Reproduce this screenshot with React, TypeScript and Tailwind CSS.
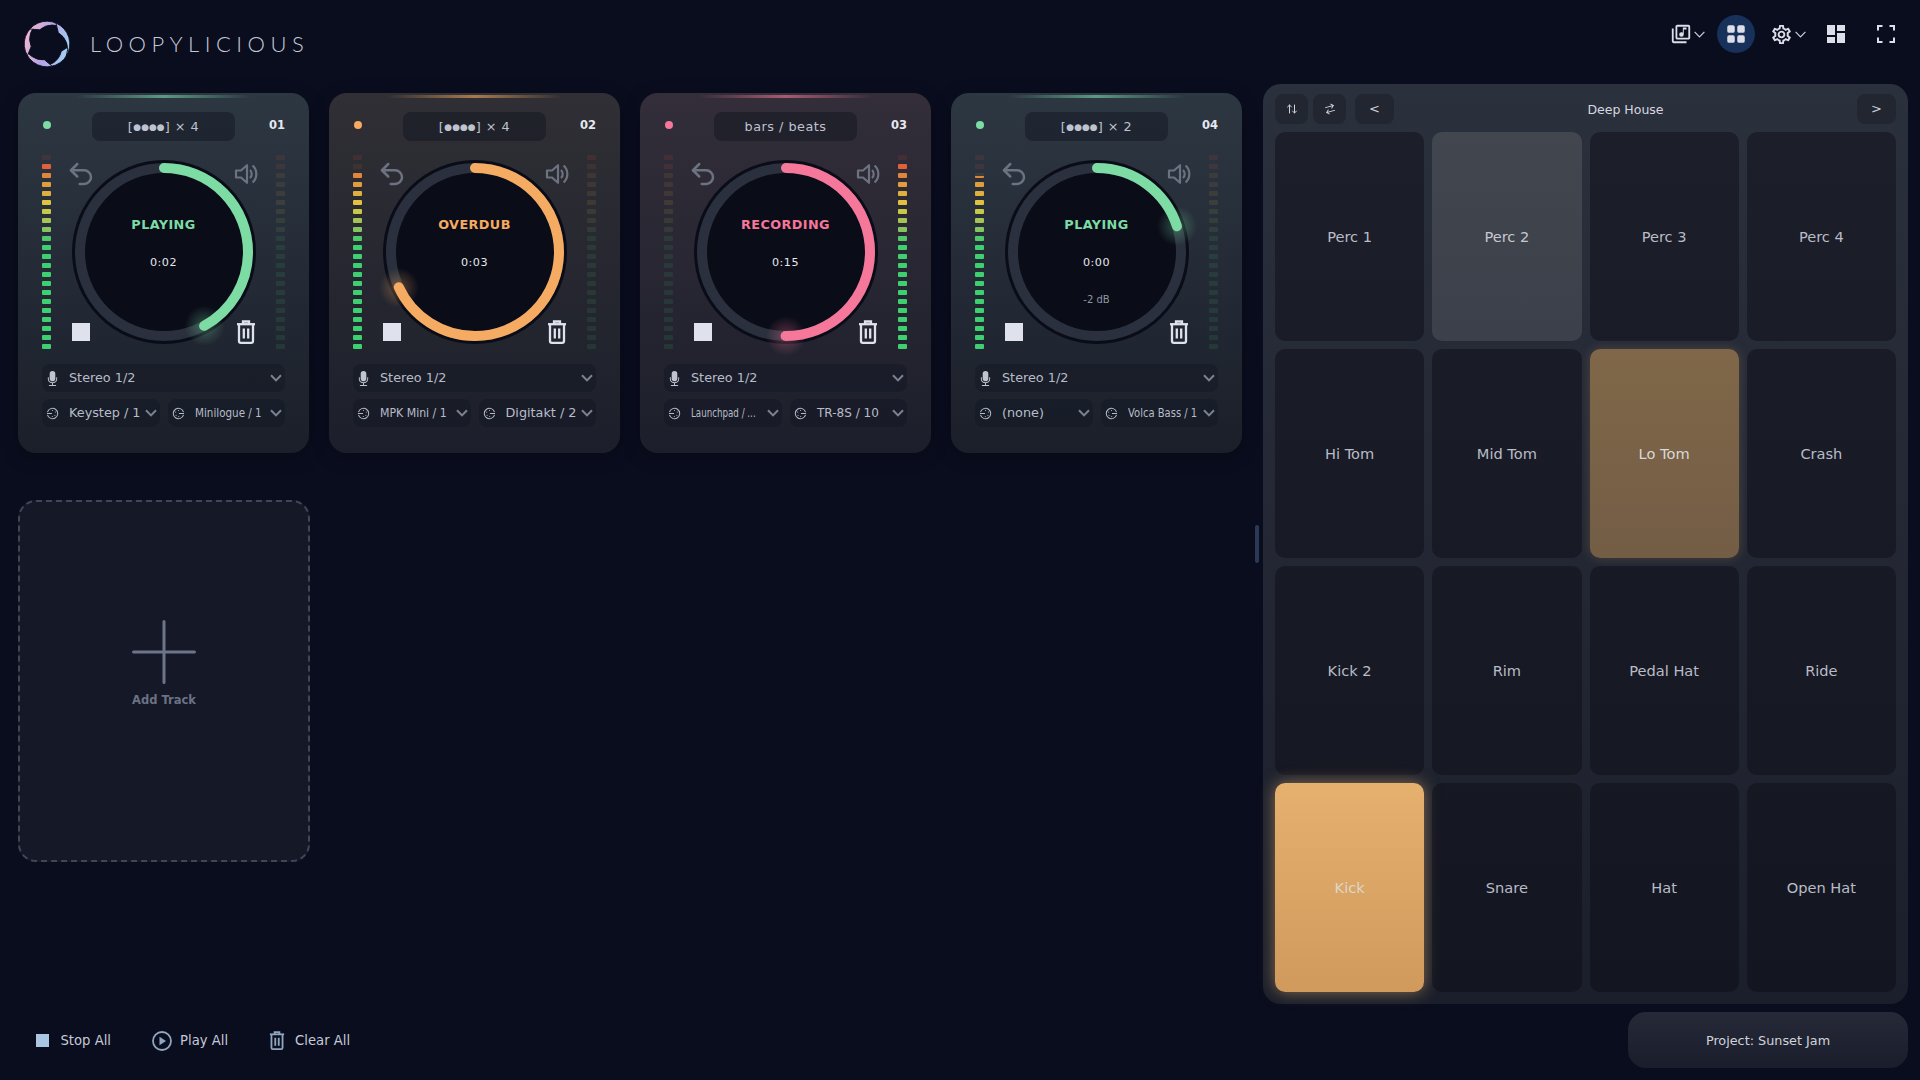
import React from "react";
import { Undo2, ArrowUpDown, ArrowRightLeft } from "lucide-react";
import { BsMicFill, BsGridFill } from "react-icons/bs";
import { MdOutlineLibraryMusic, MdOutlineSettings, MdDashboard } from "react-icons/md";

const SEG = ["#e0553a","#e0603a","#e0863a","#e09c3d","#e0b03e","#e0c240","#c8c848","#a5c455","#85c460","#4ec86b"];
const segColor = (i: number) => SEG[i] ?? "#3ecf70";

function Meter({ level }: { level: number }) {
  return (
    <div className="flex flex-col gap-[4px]">
      {Array.from({ length: 22 }).map((_, i) => {
        const fromBottom = 22 - i;
        const fill = Math.max(0, Math.min(1, level - fromBottom + 1));
        const c = segColor(i);
        return (
          <div key={i} className="flex h-[5px] w-[9px] items-end overflow-hidden rounded-[1px]" style={{ backgroundColor: c + "1c" }}>
            <div className="w-full" style={{ height: `${fill * 100}%`, backgroundColor: c }} />
          </div>
        );
      })}
    </div>
  );
}

function Chevron({ className = "text-[#7d8291]" }: { className?: string }) {
  return (
    <svg width="12" height="8" viewBox="0 0 12 8" fill="none" stroke="currentColor" strokeWidth="2" className={"shrink-0 " + className}>
      <path d="M1 1.2 6 6.4 11 1.2" />
    </svg>
  );
}

function ThinChevron() {
  return (
    <svg width="11" height="7" viewBox="0 0 11 7" fill="none" stroke="currentColor" strokeWidth="1.2" className="shrink-0 text-[#c9cdda]">
      <path d="M.6.8 5.5 5.8 10.4.8" />
    </svg>
  );
}

function MidiIcon({ out }: { out?: boolean }) {
  return (
    <svg width="13" height="13" viewBox="0 0 14 14" fill="none" stroke="#b5b9c6" strokeWidth="1.1" className="shrink-0">
      {out ? (
        <>
          <path d="M12.4 5.6A5.6 5.6 0 1 0 12.4 8.4" />
          <path d="M7.5 7H13" />
          <circle cx="7" cy="3.7" r=".6" fill="#b5b9c6" stroke="none" />
          <circle cx="4" cy="5.5" r=".6" fill="#b5b9c6" stroke="none" />
          <circle cx="4.4" cy="9" r=".6" fill="#b5b9c6" stroke="none" />
          <circle cx="7.2" cy="10.3" r=".6" fill="#b5b9c6" stroke="none" />
        </>
      ) : (
        <>
          <path d="M1.6 5.6A5.6 5.6 0 1 1 1.6 8.4" />
          <path d="M1 7H6.5" />
          <circle cx="7" cy="3.7" r=".6" fill="#b5b9c6" stroke="none" />
          <circle cx="10" cy="5.5" r=".6" fill="#b5b9c6" stroke="none" />
          <circle cx="9.6" cy="9" r=".6" fill="#b5b9c6" stroke="none" />
          <circle cx="6.8" cy="10.3" r=".6" fill="#b5b9c6" stroke="none" />
        </>
      )}
    </svg>
  );
}

function TrashIcon({ className, w = 20, h = 24 }: { className: string; w?: number; h?: number }) {
  return (
    <svg width={w} height={h} viewBox="0 0 20 24" fill="none" stroke="currentColor" strokeWidth="2.3" className={className}>
      <path d="M1 4.2H19" />
      <path d="M7 4V1.5H13V4" />
      <path d="M3 4.5V21a1.8 1.8 0 0 0 1.8 1.8H15.2A1.8 1.8 0 0 0 17 21V4.5" />
      <path d="M7.8 8.5V18.5M12.2 8.5V18.5" />
    </svg>
  );
}

function SpeakerIcon({ className }: { className: string }) {
  return (
    <svg width="24" height="24" viewBox="0 0 24 24" fill="none" stroke="currentColor" strokeWidth="2.2" className={className}>
      <path d="M2 8.5H7L13 3.2V20.8L7 15.5H2Z" strokeLinejoin="round" />
      <path d="M16 8a5.5 5.5 0 0 1 0 8" />
      <path d="M18.6 3.5a11.5 11.5 0 0 1 0 17" />
    </svg>
  );
}

function Knob({ pct, color, id }: { pct: number; color: string; id: string }) {
  const r = 84;
  const circ = 2 * Math.PI * r;
  const a = (pct / 100) * 2 * Math.PI;
  const ex = 91 + r * Math.sin(a);
  const ey = 91 - r * Math.cos(a);
  return (
    <svg width="182" height="182" viewBox="0 0 182 182" className="overflow-visible">
      <defs>
        <radialGradient id={id}>
          <stop offset="0" stopColor={color} stopOpacity=".34" />
          <stop offset="1" stopColor={color} stopOpacity="0" />
        </radialGradient>
      </defs>
      <circle cx="91" cy="91" r="92" fill="#0a0c18" />
      <circle cx="91" cy="91" r={r} fill="none" stroke="#2a303d" strokeWidth="10" />
      <circle cx={ex} cy={ey} r="20" fill={`url(#${id})`} />
      <circle
        cx="91"
        cy="91"
        r={r}
        fill="none"
        stroke={color}
        strokeWidth="10"
        strokeLinecap="round"
        strokeDasharray={`${(pct / 100) * circ} ${circ}`}
        transform="rotate(-90 91 91)"
      />
    </svg>
  );
}

type Track = {
  num: string; pattern: string; status: string; time: string; db?: string; pct: number; hex: string;
  card: string; line: string; dot: string; text: string; left: number; right: number;
  midiIn: string; midiInCls: string; midiOut: string; midiOutCls: string;
};

const tracks: Track[] = [
  { num: "01", pattern: "× 4", status: "PLAYING", time: "0:02", pct: 42, hex: "#7ddba4",
    card: "bg-gradient-to-b from-[#2d3742] to-[#1b1f2a]", line: "via-[#5b9a83]", dot: "bg-[#7ddba4]", text: "text-[#7ddba4]",
    left: 21, right: 0, midiIn: "Keystep / 1", midiInCls: "scale-x-100", midiOut: "Minilogue / 1", midiOutCls: "scale-x-[.81]" },
  { num: "02", pattern: "× 4", status: "OVERDUB", time: "0:03", pct: 68, hex: "#f5ab62",
    card: "bg-gradient-to-b from-[#302f35] to-[#1c1f2b]", line: "via-[#a87a4c]", dot: "bg-[#f5ab62]", text: "text-[#f5ab62]",
    left: 20, right: 0, midiIn: "MPK Mini / 1", midiInCls: "scale-x-[.855]", midiOut: "Digitakt / 2", midiOutCls: "scale-x-100" },
  { num: "03", pattern: "bars / beats", status: "RECORDING", time: "0:15", pct: 50, hex: "#f5779a",
    card: "bg-gradient-to-b from-[#332e39] to-[#1c1f2b]", line: "via-[#a85a72]", dot: "bg-[#f5779a]", text: "text-[#f5779a]",
    left: 0, right: 21, midiIn: "Launchpad / ...", midiInCls: "scale-x-[.68]", midiOut: "TR-8S / 10", midiOutCls: "scale-x-[.94]" },
  { num: "04", pattern: "× 2", status: "PLAYING", time: "0:00", db: "-2 dB", pct: 20, hex: "#7ddba4",
    card: "bg-gradient-to-b from-[#2d3742] to-[#1b1f2a]", line: "via-[#5b9a83]", dot: "bg-[#7ddba4]", text: "text-[#7ddba4]",
    left: 19.5, right: 0, midiIn: "(none)", midiInCls: "scale-x-100", midiOut: "Volca Bass / 1", midiOutCls: "scale-x-[.78]" },
];

function SelectBox({ icon, label, cls }: { icon: React.ReactNode; label: string; cls: string }) {
  return (
    <div className="flex h-7 min-w-0 items-center rounded-lg bg-[#0f1420]/35 pr-[3px] pl-[3px]">
      <div className="mr-[9px] flex w-[15px] shrink-0 justify-center">{icon}</div>
      <div className="min-w-0 flex-1 whitespace-nowrap text-[12.8px] text-[#b8bcc9]">
        <span className={"inline-block origin-left " + cls}>{label}</span>
      </div>
      <Chevron />
    </div>
  );
}

function Pattern({ value }: { value: string }) {
  if (value.includes("/")) return <>{value}</>;
  return (
    <>
      [<span className="relative -top-[1px] text-[9px] tracking-normal">●●●●</span>] {value}
    </>
  );
}

function TrackCard({ t }: { t: Track }) {
  return (
    <div className={"relative flex h-[360px] w-[291px] flex-col rounded-[18px] px-6 pt-[19px] shadow-[0_4px_18px_rgba(0,0,0,.25)] " + t.card}>
      <div className={"absolute top-[2px] right-[20%] left-[20%] h-[3px] bg-gradient-to-r from-transparent to-transparent " + t.line} />
      <div className="grid h-[29px] grid-cols-[1fr_143px_1fr] items-center">
        <span className={"mb-[3px] ml-[1px] size-2 rounded-full " + t.dot} />
        <div className="flex h-[29px] items-center justify-center rounded-lg bg-[#0f1420]/45 text-[12.8px] tracking-[.5px] text-[#bfc3cf]">
          <span><Pattern value={t.pattern} /></span>
        </div>
        <span className="mb-[1px] text-right text-[11.5px] font-bold text-[#e6e8ef]">{t.num}</span>
      </div>
      <div className="relative mt-[14px] flex h-[194px] items-start justify-between">
        <Meter level={t.left} />
        <Meter level={t.right} />
        <div className="absolute top-[6px] left-[30.5px]">
          <div className="relative">
            <Knob pct={t.pct} color={t.hex} id={"g" + t.num} />
            <div className="absolute inset-0 flex flex-col items-center">
              <div className={"absolute top-[54px] text-[12.8px] font-bold tracking-[.4px] " + t.text}>{t.status}</div>
              <div className="absolute top-[94px] text-[11.2px] tracking-[.5px] text-[#e5e7eb]">{t.time}</div>
              {t.db && <div className="absolute top-[131px] text-[10px] text-[#9096a3]">{t.db}</div>}
            </div>
          </div>
        </div>
        <Undo2 size={30} strokeWidth={2} className="absolute top-[4px] left-[24px] text-[#6c7280]" />
        <SpeakerIcon className="absolute top-[7px] left-[192px] text-[#6c7280]" />
        <div className="absolute top-[168px] left-[30px] size-[18px] bg-[#dfe1ec]" />
        <TrashIcon className="absolute top-[165px] left-[193px] text-[#dfe1ec]" w={22} />
      </div>
      <div className="mt-[15px] flex flex-col gap-[7px]">
        <SelectBox icon={<BsMicFill size={15} className="text-[#c0c4d0]" />} label="Stereo 1/2" cls="scale-x-100" />
        <div className="grid grid-cols-2 gap-2">
          <SelectBox icon={<MidiIcon />} label={t.midiIn} cls={t.midiInCls} />
          <SelectBox icon={<MidiIcon out />} label={t.midiOut} cls={t.midiOutCls} />
        </div>
      </div>
    </div>
  );
}

const pol = (r: number, deg: number) => {
  const a = (deg * Math.PI) / 180;
  return `${(23 + r * Math.cos(a)).toFixed(2)} ${(23 + r * Math.sin(a)).toFixed(2)}`;
};

function Logo() {
  const segs = [0, 72, 144, 216, 288].map((s) => s + 5);
  return (
    <svg width="46" height="46" viewBox="0 0 46 46">
      <defs>
        <linearGradient id="logoG" gradientUnits="userSpaceOnUse" x1="0" y1="14" x2="46" y2="28">
          <stop offset="0" stopColor="#f3b8cf" />
          <stop offset=".5" stopColor="#b7a3e6" />
          <stop offset="1" stopColor="#9fd3f2" />
        </linearGradient>
      </defs>
      {segs.map((s) => (
        <path
          key={s}
          fill="url(#logoG)"
          stroke="#0a0d1e"
          strokeWidth=".9"
          d={`M${pol(22.8, s)}A22.8 22.8 0 0 1 ${pol(22.8, s + 100)}A19 19 0 0 0 ${pol(16, s + 22)}Z`}
        />
      ))}
    </svg>
  );
}

const pads = [
  "Perc 1","Perc 2","Perc 3","Perc 4",
  "Hi Tom","Mid Tom","Lo Tom","Crash",
  "Kick 2","Rim","Pedal Hat","Ride",
  "Kick","Snare","Hat","Open Hat",
];

function padCls(name: string) {
  if (name === "Perc 2") return "bg-gradient-to-b from-[#42464e] to-[#3c404a] text-[#c5c8d0]";
  if (name === "Lo Tom") return "bg-gradient-to-b from-[#806749] to-[#735d45] text-[#d8d8d8] shadow-[0_0_12px_rgba(200,150,90,.25)]";
  if (name === "Kick") return "bg-gradient-to-b from-[#e6b06f] to-[#cf9a5c] text-[#ded7c9] shadow-[0_0_16px_rgba(228,173,108,.55)]";
  return "bg-[#0a0c14]/45 text-[#b9bcc6]";
}

function ToolBtn({ children, cls }: { children: React.ReactNode; cls: string }) {
  return (
    <div className={"flex h-[30px] items-center justify-center rounded-lg bg-[#141821]/40 text-[13px] text-[#cfd2dc] " + cls}>
      {children}
    </div>
  );
}

export default function App() {
  return (
    <div className="flex h-screen w-[1920px] flex-col overflow-hidden bg-[#0a0d1e] font-['DejaVu_Sans',sans-serif]">
      <header className="flex h-[84px] shrink-0 items-start justify-between">
        <div className="flex items-center pt-[21px] pl-6">
          <Logo />
          <span className="mb-[2px] ml-[20px] font-['Lato',sans-serif] text-[22px] font-light tracking-[5.5px] text-[#c5c9d6]">LOOPYLICIOUS</span>
        </div>
        <div className="flex items-center pt-[15px] pr-[25px] text-[#dcdfea]">
          <div className="flex items-center gap-[2px]">
            <MdOutlineLibraryMusic size={22} />
            <ThinChevron />
          </div>
          <div className="ml-[12px] flex size-[38px] items-center justify-center rounded-full bg-[#17315a]">
            <BsGridFill size={20} />
          </div>
          <div className="ml-[15px] flex items-center gap-[2px]">
            <MdOutlineSettings size={23} />
            <ThinChevron />
          </div>
          <MdDashboard size={24} className="ml-[18px]" />
          <svg width="18" height="18" viewBox="0 0 18 18" fill="none" stroke="currentColor" strokeWidth="2" className="ml-[29px]">
            <path d="M1 5.5V1H5.5M12.5 1H17V5.5M17 12.5V17H12.5M5.5 17H1V12.5" />
          </svg>
        </div>
      </header>

      <div className="flex h-[920px] shrink-0">
        <div className="relative w-[1263px] shrink-0 pt-[9px] pl-[18px]">
          <div className="grid grid-cols-[repeat(4,291px)] gap-x-5 gap-y-[47px]">
            {tracks.map((t) => (
              <TrackCard key={t.num} t={t} />
            ))}
            <div className="flex h-[362px] w-[292px] flex-col items-center rounded-[18px] border-2 border-dashed border-[#3f4656] bg-[#141827] pt-[118px]">
              <svg width="64" height="64" viewBox="0 0 64 64" stroke="#6d7487" strokeWidth="3" strokeLinecap="round">
                <path d="M32 1.5V62.5M1.5 32H62.5" />
              </svg>
              <div className="mt-[8px] text-[11.5px] font-bold text-[#6b7284]">Add Track</div>
            </div>
          </div>
          <div className="absolute top-[441px] right-1 h-[38px] w-1 rounded-full bg-[#2a3a55]" />
        </div>

        <div className="flex h-[920px] w-[645px] shrink-0 flex-col rounded-[18px] bg-gradient-to-b from-[#2b303d] to-[#1b1f2b] px-3 pt-[10px] pb-3">
          <div className="flex h-[30px] shrink-0 items-center">
            <ToolBtn cls="w-[33px]"><ArrowUpDown size={12} strokeWidth={2} /></ToolBtn>
            <ToolBtn cls="ml-[5px] w-[33px]"><ArrowRightLeft size={12} strokeWidth={2} className="-rotate-[15deg]" /></ToolBtn>
            <ToolBtn cls="ml-[9px] w-[39px]">&lt;</ToolBtn>
            <div className="flex-1 pt-[2px] text-center text-[12.5px] text-[#d5d8e0]">Deep House</div>
            <ToolBtn cls="w-[39px]">&gt;</ToolBtn>
          </div>
          <div className="mt-2 grid min-h-0 flex-1 grid-cols-4 grid-rows-4 gap-2">
            {pads.map((p) => (
              <div key={p} className={"flex items-center justify-center rounded-[10px] pt-[1px] text-[14.6px] " + padCls(p)}>{p}</div>
            ))}
          </div>
        </div>
      </div>

      <footer className="flex h-[72px] shrink-0 items-center justify-between pr-3 pl-9 text-[13.2px] text-[#c5cad8]">
        <div className="flex items-center gap-[41px] pt-[1px]">
          <div className="flex items-center gap-3">
            <div className="size-[12.5px] bg-[#a9c6e2]" />
            <span>Stop All</span>
          </div>
          <div className="flex items-center gap-2">
            <svg width="20" height="20" viewBox="0 0 20 20" className="text-[#8fa6c0]">
              <circle cx="10" cy="10" r="9" fill="none" stroke="currentColor" strokeWidth="1.8" />
              <path d="M7.5 5.8 14 10 7.5 14.2Z" fill="currentColor" />
            </svg>
            <span>Play All</span>
          </div>
          <div className="flex items-center gap-[10px]">
            <TrashIcon className="text-[#8fa6c0]" w={16} h={19} />
            <span>Clear All</span>
          </div>
        </div>
        <div className="flex h-14 w-[280px] items-center justify-center rounded-[18px] bg-gradient-to-b from-[#262a38] to-[#1a1d2b] pt-[1px] text-[12.8px] text-[#d0d3dc]">
          Project: Sunset Jam
        </div>
      </footer>
    </div>
  );
}
